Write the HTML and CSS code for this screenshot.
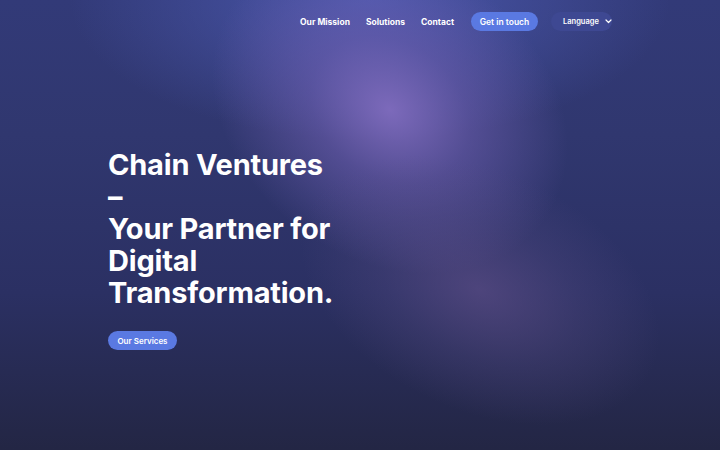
FILE: index.html
```html
<!DOCTYPE html>
<html lang="en">
<head>
<meta charset="utf-8">
<title>Chain Ventures</title>
<link rel="stylesheet" href="styles.css">
</head>
<body>
<div class="page">
  <div class="glow glow-a"></div>
  <div class="glow glow-b"></div>
  <div class="container">
    <header class="nav">
      <a class="nav-link" href="#">Our Mission</a>
      <a class="nav-link" href="#">Solutions</a>
      <a class="nav-link" href="#">Contact</a>
      <a class="btn btn-primary" href="#">Get in touch</a>
      <button class="lang">Language
        <svg class="chev" width="7" height="5" viewBox="0 0 7 5"><path d="M1 1l2.5 2.5L6 1" fill="none" stroke="#fff" stroke-width="1.2" stroke-linecap="round" stroke-linejoin="round"/></svg>
      </button>
    </header>
    <main class="hero">
      <h1 class="title"><span class="line">Chain Ventures</span><span class="line">–</span><span class="line">Your Partner for</span><span class="line">Digital</span><span class="line">Transformation.</span></h1>
      <a class="btn btn-primary btn-hero" href="#">Our Services</a>
    </main>
  </div>
</div>
</body>
</html>
```
FILE: styles.css
```css
* { box-sizing: border-box; }
html, body { margin: 0; padding: 0; }
body {
  font-family: Inter, "Noto Sans", sans-serif;
  color: #fff;
  background: #262a52;
}
.page {
  position: relative;
  width: 720px;
  height: 450px;
  overflow: hidden;
  background:
    radial-gradient(ellipse 300px 140px at 370px 0px, rgba(78,92,180,0.85), rgba(78,92,180,0) 100%),
    linear-gradient(180deg, #323a78 0%, #30376f 30%, #2b3063 65%, #232644 100%);
}
.glow {
  position: absolute;
  border-radius: 50%;
  pointer-events: none;
}
.glow-a {
  left: 200px; top: -40px;
  width: 380px; height: 300px;
  transform: rotate(35deg);
  background: radial-gradient(closest-side, rgba(128,108,190,0.95), rgba(112,96,178,0.55) 45%, rgba(80,80,160,0) 100%);
}
.glow-b {
  left: 290px; top: 170px;
  width: 380px; height: 240px;
  transform: rotate(25deg);
  background: radial-gradient(closest-side, rgba(100,82,140,0.6), rgba(90,78,135,0.28) 55%, rgba(80,70,130,0) 100%);
}
.container {
  position: relative;
  width: 504px;
  margin: 0 auto;
}
.nav {
  display: flex;
  justify-content: flex-end;
  align-items: center;
  height: 43px;
}
.nav-link {
  color: #fff;
  text-decoration: none;
  font-size: 8.5px;
  font-weight: 700;
  margin-right: 16px;
  white-space: nowrap;
}
.btn {
  display: inline-flex;
  align-items: center;
  justify-content: center;
  text-decoration: none;
  color: #fff;
  font-size: 8.5px;
  font-weight: 600;
  height: 19px;
  border-radius: 10px;
  white-space: nowrap;
}
.btn-primary {
  background: #5a79e2;
  padding: 0 10px;
}
.nav .btn-primary { width: 67px; margin-right: 13px; margin-left: 1px; padding: 0; }
.lang {
  display: inline-flex;
  align-items: center;
  height: 19px;
  width: 61px;
  padding: 0 0 0 12px;
  border: none;
  border-radius: 10px;
  background: #3e4892;
  color: #fff;
  font-family: inherit;
  font-size: 7.5px;
  font-weight: 600;
  white-space: nowrap;
}
.chev { margin-left: 6px; }
.hero {
  padding-top: 106px;
}
.title {
  margin: 0;
  font-size: 29px;
  line-height: 32px;
  font-weight: 700;
  letter-spacing: -0.2px;
}
.line { display: block; }
.btn-hero {
  margin-top: 22px;
  width: 69px;
  padding: 0;
  font-size: 8px;
}
```
